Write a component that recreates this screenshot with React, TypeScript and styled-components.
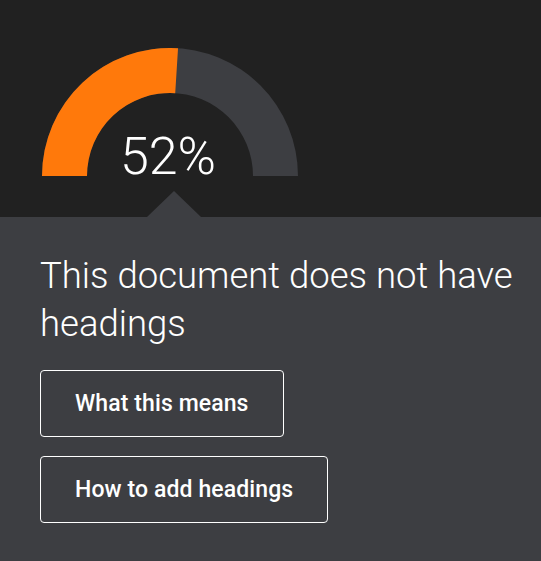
import * as React from 'react';
import styled, { createGlobalStyle } from 'styled-components';

const COLORS = {
  Night: '#212121',
  Slate: '#3d3e42',
  Orange: '#ff790b',
  White: '#ffffff',
};

const GlobalStyle = createGlobalStyle`
  * {
    box-sizing: border-box;
  }
  body {
    margin: 0;
    background: ${COLORS.Slate};
    font-family: 'Liberation Sans', Arial, sans-serif;
    color: ${COLORS.White};
  }
`;

type GaugeProps = {
  value: number;
};

function Gauge({ value }: GaugeProps) {
  const cx = 128;
  const cy = 128;
  const outer = 128;
  const inner = 83;
  const angle = Math.PI * (1 - value / 100);
  const ox = cx + outer * Math.cos(angle);
  const oy = cy - outer * Math.sin(angle);
  const ix = cx + inner * Math.cos(angle);
  const iy = cy - inner * Math.sin(angle);

  return (
    <GaugeSvg width={256} height={150} viewBox="0 0 256 150">
      <path
        d={`M0 128 A${outer} ${outer} 0 0 1 256 128 L${cx + inner} 128 A${inner} ${inner} 0 0 0 ${cx - inner} 128 Z`}
        fill={COLORS.Slate}
      />
      <path
        d={`M0 128 A${outer} ${outer} 0 0 1 ${ox} ${oy} L${ix} ${iy} A${inner} ${inner} 0 0 0 ${cx - inner} 128 Z`}
        fill={COLORS.Orange}
      />
      <GaugeLabel x={126} y={126} textAnchor="middle">
        {value}%
      </GaugeLabel>
    </GaugeSvg>
  );
}

function App() {
  return (
    <>
      <GlobalStyle />
      <Page>
        <ScoreArea>
          <Gauge value={52} />
        </ScoreArea>
        <Panel>
          <Heading>This document does not have headings</Heading>
          <Actions>
            <ActionButton type="button">What this means</ActionButton>
            <ActionButton type="button">How to add headings</ActionButton>
          </Actions>
        </Panel>
      </Page>
    </>
  );
}

const Page = styled.div`
  width: 541px;
  height: 561px;
  display: flex;
  flex-direction: column;
  overflow: hidden;
`;

const ScoreArea = styled.div`
  height: 217px;
  padding: 48px 0 0 42px;
  background: ${COLORS.Night};
  overflow: hidden;
`;

const GaugeSvg = styled.svg`
  display: block;
`;

const GaugeLabel = styled.text`
  font-family: Roboto, 'Liberation Sans', sans-serif;
  font-weight: 300;
  font-size: 52px;
  fill: ${COLORS.White};
`;

const Panel = styled.section`
  position: relative;
  flex: 1;
  background: ${COLORS.Slate};
  padding: 35px 20px 0 40px;

  &::before {
    content: '';
    position: absolute;
    top: -26px;
    left: 147px;
    border-left: 27px solid transparent;
    border-right: 27px solid transparent;
    border-bottom: 26px solid ${COLORS.Slate};
  }
`;

const Heading = styled.h1`
  margin: 0;
  font-family: Roboto, 'Liberation Sans', sans-serif;
  font-weight: 300;
  font-size: 36.5px;
  line-height: 48px;
`;

const Actions = styled.div`
  display: flex;
  flex-direction: column;
  align-items: flex-start;
  gap: 19px;
  margin-top: 22px;
`;

const ActionButton = styled.button`
  height: 67px;
  padding: 0 34px;
  border: 1px solid ${COLORS.White};
  border-radius: 4px;
  background: transparent;
  color: ${COLORS.White};
  font-family: Roboto, 'Liberation Sans', Arial, sans-serif;
  font-weight: 500;
  font-size: 23px;
  letter-spacing: 0.1px;
  cursor: pointer;
`;

export default App;
